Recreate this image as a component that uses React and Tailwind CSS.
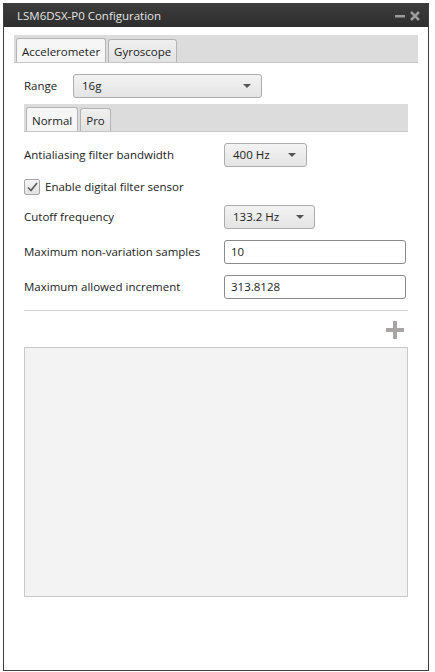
import { useState } from 'react'

const font = { fontFamily: '"Open Sans", "Noto Sans", sans-serif' }

const Caret = () => (
  <svg width="8" height="4" viewBox="0 0 8 4" className="shrink-0">
    <path d="M0 0h8L4 4z" fill="#555" />
  </svg>
)

const Select = ({ value, className = '' }) => (
  <div
    className={`flex items-center justify-between h-[24px] pl-2 pr-2.5 rounded-[3px] border border-[#acacac] bg-gradient-to-b from-[#f3f3f3] to-[#e4e4e4] text-[11.5px] text-[#222] ${className}`}
  >
    <span>{value}</span>
    <Caret />
  </div>
)

const Field = ({ value }) => (
  <div className="flex items-center h-[24px] w-[182px] px-1.5 rounded-[3px] border border-[#8a8a8a] bg-white text-[11.5px] text-[#222]">
    {value}
  </div>
)

const Tabs = ({ items, active, onChange, className = '' }) => (
  <div className={`flex items-end gap-[2px] h-[28px] pl-[2px] bg-[#dcdcdc] border-b border-[#c6c6c6] ${className}`}>
    {items.map((t) => (
      <button
        key={t}
        onClick={() => onChange(t)}
        className={`px-[5px] pt-[2px] text-[11.5px] text-[#222] border border-b-0 border-[#b4b4b4] rounded-t-[3px] ${
          t === active ? 'bg-[#f6f6f6] h-[24px]' : 'h-[23px] bg-gradient-to-b from-[#f0f0f0] to-[#e2e2e2]'
        }`}
      >
        {t}
      </button>
    ))}
  </div>
)

const Row = ({ label, className = '', children }) => (
  <div className={`flex items-center h-[24px] ${className}`}>
    <span className="w-[200px] text-[11.5px] text-[#222]">{label}</span>
    {children}
  </div>
)

export default function App() {
  const [sensor, setSensor] = useState('Accelerometer')
  const [mode, setMode] = useState('Normal')

  return (
    <div className="w-[435px] h-[672px] bg-white pt-[3px] pl-[3px]" style={font}>
      <div className="w-[426px] h-[668px] border border-[#3e3e3e] flex flex-col">
        <div className="flex items-center justify-between h-[23px] pl-[13px] pr-[8px] bg-gradient-to-b from-[#3c3c3c] to-[#2e2e2e]">
          <span className="text-[11.5px] text-[#e4e4e4]">LSM6DSX-P0 Configuration</span>
          <div className="flex items-center gap-[5px] text-[#9b9b9b]">
            <svg width="10" height="10" viewBox="0 0 10 10">
              <rect x="0" y="4" width="10" height="2.5" fill="currentColor" />
            </svg>
            <svg width="10" height="10" viewBox="0 0 10 10">
              <path d="M1 1l8 8M9 1l-8 8" stroke="currentColor" strokeWidth="2.5" />
            </svg>
          </div>
        </div>

        <div className="px-[10px] pt-[8px]">
          <Tabs items={['Accelerometer', 'Gyroscope']} active={sensor} onChange={setSensor} />

          <div className="px-[10px] pt-[11px]">
            <div className="flex items-center h-[24px]">
              <span className="w-[49px] text-[11.5px] text-[#222]">Range</span>
              <Select value="16g" className="w-[189px]" />
            </div>

            <Tabs
              items={['Normal', 'Pro']}
              active={mode}
              onChange={setMode}
              className="mt-[6px]"
            />

            <Row label="Antialiasing filter bandwidth" className="mt-[11px]">
              <Select value="400 Hz" className="w-[83px]" />
            </Row>
            <label className="flex items-center gap-[5px] h-[16px] mt-[12px] text-[11.5px] text-[#222]">
              <span className="flex items-center justify-center w-[16px] h-[16px] rounded-[2px] border border-[#a8a8a8] bg-gradient-to-b from-[#f6f6f6] to-[#e2e2e2]">
                <svg width="11" height="10" viewBox="0 0 11 10">
                  <path d="M1 5.5l3 3L10 1" fill="none" stroke="#5a5a5a" strokeWidth="1.6" />
                </svg>
              </span>
              Enable digital filter sensor
            </label>
            <Row label="Cutoff frequency" className="mt-[10px]">
              <Select value="133.2 Hz" className="w-[91px]" />
            </Row>
            <Row label="Maximum non-variation samples" className="mt-[11px]">
              <Field value="10" />
            </Row>
            <Row label="Maximum allowed increment" className="mt-[11px]">
              <Field value="313.8128" />
            </Row>

            <div className="mt-[11px] border-t border-[#cfcfcf]" />

            <div className="flex justify-end pr-[4px] pt-[10px] pb-[8px]">
              <svg width="18" height="18" viewBox="0 0 18 18">
                <path d="M7 0h4v7h7v4h-7v7H7v-7H0V7h7z" fill="#a8a4a4" />
              </svg>
            </div>

            <div className="h-[250px] bg-[#f3f3f3] border border-[#c8c8c8]" />
          </div>
        </div>
      </div>
    </div>
  )
}
